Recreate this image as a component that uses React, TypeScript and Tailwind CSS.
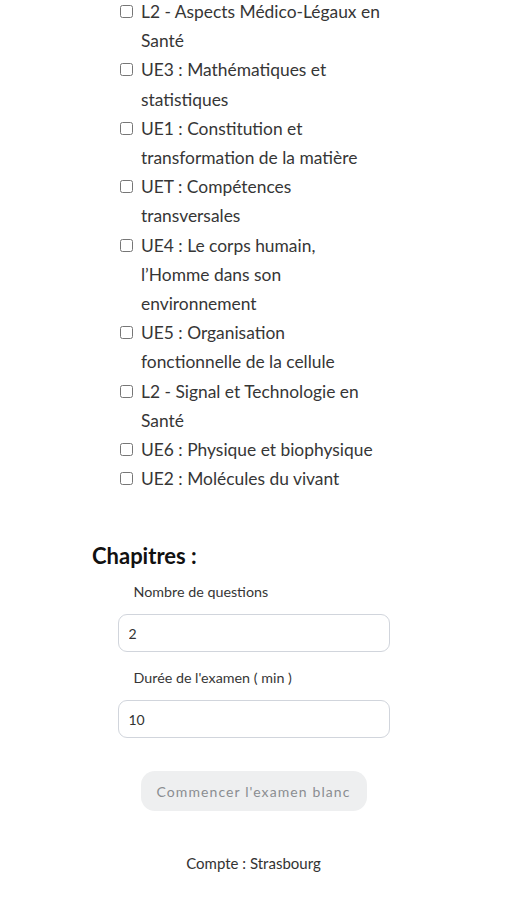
import React from "react";

// line breaks follow the reference (its font is wider than Lato)
const UNITES: string[][] = [
  ["L2 - Aspects Médico-Légaux en", "Santé"],
  ["UE3 : Mathématiques et", "statistiques"],
  ["UE1 : Constitution et", "transformation de la matière"],
  ["UET : Compétences", "transversales"],
  ["UE4 : Le corps humain,", "l’Homme dans son", "environnement"],
  ["UE5 : Organisation", "fonctionnelle de la cellule"],
  ["L2 - Signal et Technologie en", "Santé"],
  ["UE6 : Physique et biophysique"],
  ["UE2 : Molécules du vivant"],
];

export default function App() {
  return (
    <div className="min-h-[900px] w-full bg-white text-[#363636] overflow-hidden" style={{ fontFamily: "Lato, 'Noto Sans', sans-serif" }}>
      <ul className="-mt-[3px] pl-[120px] flex flex-col">
        {UNITES.map((lines) => (
          <li key={lines[0]} className="flex items-start">
            <input type="checkbox" className="mt-[8px] h-[13px] w-[13px] shrink-0 accent-gray-500" />
            <span className="ml-[8px] flex flex-col whitespace-nowrap text-[17.4px] leading-[29.2px]">
              {lines.map((l) => (
                <span key={l}>{l}</span>
              ))}
            </span>
          </li>
        ))}
      </ul>

      <h2 className="mt-[49px] pl-[92px] text-[22px] font-bold text-[#111] leading-[28px]">Chapitres :</h2>

      <div className="mt-[12px] flex flex-col items-center">
        <div className="w-[272px]">
          <label className="block pl-[16px] text-[14.3px] leading-[20px]">Nombre de questions</label>
          <input
            defaultValue="2"
            className="mt-[12px] block h-[38px] w-full rounded-[9px] border border-gray-300 px-[10px] text-[14px] text-[#333] outline-none"
          />
          <label className="mt-[16px] block pl-[16px] text-[14.3px] leading-[20px]">Durée de l'examen ( min )</label>
          <input
            defaultValue="10"
            className="mt-[12px] block h-[38px] w-full rounded-[9px] border border-gray-300 px-[10px] text-[14px] text-[#333] outline-none"
          />
        </div>
        <button
          disabled
          className="mt-[33px] h-[40px] w-[226px] rounded-[14px] bg-[#eeeff0] text-[14px] tracking-[1.1px] text-[#8a8d91]"
        >
          Commencer l'examen blanc
        </button>
        <p className="mt-[41px] text-[15px] text-[#333]">Compte : Strasbourg</p>
      </div>
    </div>
  );
}
